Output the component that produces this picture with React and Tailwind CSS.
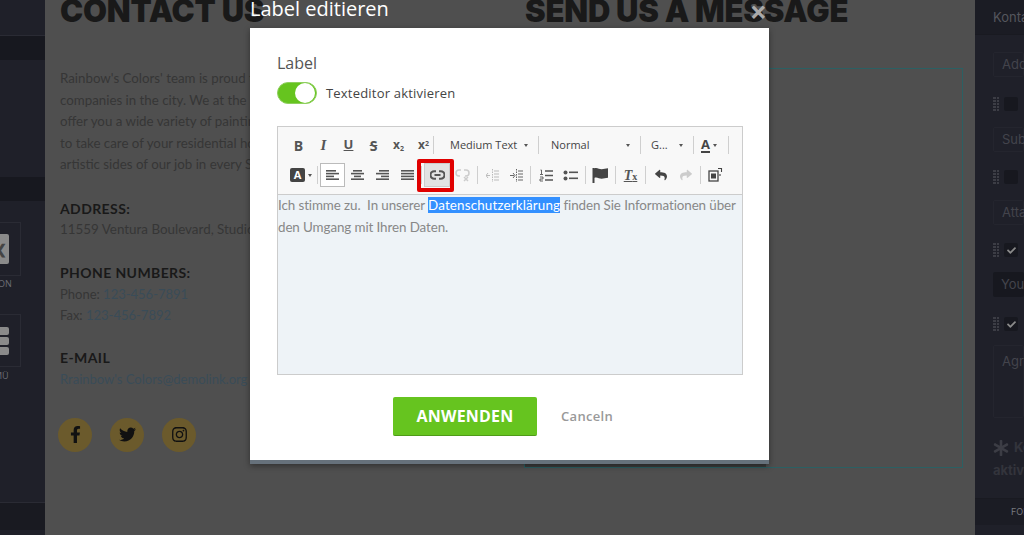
import React from "react";
import { FaFacebookF, FaTwitter, FaInstagram, FaReply, FaShare, FaCheck, FaAsterisk } from "react-icons/fa";

const Sep = () => <span className="mx-[2px] block h-[18px] w-px shrink-0 bg-[#cfcfcf]" />;

const Btn = ({ w = "w-[25px]", className = "", children }) => (
  <span className={`flex h-[24px] ${w} shrink-0 items-center justify-center text-[#555] ${className}`}>{children}</span>
);

const Lines = ({ rows, color = "#555" }) => (
  <svg width="13" height="13" viewBox="0 0 13 13" fill={color}>
    {rows.map(([x, w], i) => (
      <rect key={i} x={x} y={1 + i * 2.8} width={w} height="1.6" />
    ))}
  </svg>
);

const Caret = () => <span className="block h-0 w-0 shrink-0 border-x-[2.5px] border-t-[3px] border-x-transparent border-t-[#555]" />;

const Chain = () => (
  <svg width="15" height="10" viewBox="0 0 15 10" fill="none" stroke="#555" strokeWidth="2">
    <path d="M6 1.200H4.300a3.800 3.800 0 0 0 0 7.600H6" />
    <path d="M9 1.200h1.700a3.800 3.800 0 0 1 0 7.600H9" />
    <path d="M4.500 5h6" />
  </svg>
);

const BrokenChain = () => (
  <svg width="15" height="15" viewBox="0 0 15 15" fill="none" stroke="#ccc" strokeWidth="1.500">
    <path d="M6 2H4a3 3 0 0 0 0 6h1M9 2h2a3 3 0 0 1 0 6h-1" />
    <path d="M9 9l4 4M13 9l-4 4" />
  </svg>
);

const Indent = ({ color, flip }) => (
  <svg width="13" height="13" viewBox="0 0 13 13" fill="none" stroke={color} strokeWidth="1">
    <path d="M6.500 0v13" strokeDasharray="1.500 1" />
    <path d="M8 2h5M8 5h5M8 8h5M8 11h5M0 6.500h4" />
    <path d={flip ? "M3 4l2 2.500L3 9" : "M2 4L0 6.500 2 9"} />
  </svg>
);

const OrderedList = () => (
  <svg width="14" height="13" viewBox="0 0 14 13" fill="none" stroke="#555">
    <path d="M1.500 1h1v4M1 5.500h3M1 8h3v2H1v2h3" strokeWidth="0.9" />
    <path d="M6 2h8M6 6.500h8M6 11h8" strokeWidth="1.400" />
  </svg>
);

const BulletList = () => (
  <svg width="15" height="13" viewBox="0 0 15 13" fill="#555">
    <circle cx="2.500" cy="3.500" r="2" />
    <circle cx="2.500" cy="9.500" r="2" />
    <rect x="6" y="2.500" width="9" height="1.600" />
    <rect x="6" y="8.500" width="9" height="1.600" />
  </svg>
);

const Flag = () => (
  <svg width="17" height="16" viewBox="0 0 17 16" fill="#444">
    <rect x="0.500" y="1" width="2" height="15" />
    <path d="M2 1.500c3-1.500 5 .8 7.500.8 2.500 0 4-1 6.500-1v9.500c-2.500 0-4 1-6.500 1s-4.500-2.300-7.500-.8z" />
  </svg>
);

const CopyIcon = () => (
  <svg width="16" height="16" viewBox="0 0 16 16" fill="none" stroke="#444">
    <rect x="1" y="4" width="9" height="10" strokeWidth="1.300" />
    <rect x="3" y="6.500" width="5" height="5" fill="#444" stroke="none" />
    <path d="M10 1.500h3.500V5M12 7v2" strokeWidth="1.100" />
  </svg>
);

const Toolbar = () => (
  <div className="h-[68px] border-b border-[#ccc] bg-[#f8f8f8] pl-[8px] pt-[6px] font-['Open_Sans',sans-serif]">
    <div className="flex h-[24px] items-center">
      <Btn><b className="text-[14px]">B</b></Btn>
      <Btn><i className="font-['Liberation_Serif',serif] text-[15px] font-bold">I</i></Btn>
      <Btn><b className="text-[13px] underline">U</b></Btn>
      <Btn><b className="text-[14px] line-through">S</b></Btn>
      <Btn><b className="text-[12px] leading-none">x<sub className="text-[7px]">2</sub></b></Btn>
      <Btn><b className="text-[12px] leading-none">x<sup className="text-[7px]">2</sup></b></Btn>
      <span className="-ml-[5px] flex"><Sep /></span>
      <span className="ml-[14px] flex w-[86px] shrink-0 items-center gap-[7px] text-[11px] text-[#444]">Medium Text<Caret /></span>
      <Sep />
      <span className="ml-[10px] flex w-[87px] shrink-0 items-center justify-between pr-[8px] text-[11px] text-[#444]">Normal<Caret /></span>
      <Sep />
      <span className="ml-[8px] flex w-[40px] shrink-0 items-center justify-between pr-[8px] text-[11px] text-[#444]">G...<Caret /></span>
      <Sep />
      <span className="ml-[5px] flex w-[25px] shrink-0 items-center gap-[3px] text-[13px] font-bold text-[#444]"><span className="border-b-2 border-[#444] leading-[14px]">A</span><Caret /></span>
      <Sep />
    </div>
    <div className="mt-[6px] flex h-[24px] items-center">
      <span className="flex w-[29px] shrink-0 items-center justify-center gap-[3px] pl-[1px]">
        <span className="flex h-[14px] w-[15px] items-center justify-center rounded-[2px] bg-[#444] text-[11px] font-bold text-white">A</span>
        <Caret />
      </span>
      <Sep />
      <Btn className="border border-[#bbb] bg-white"><Lines rows={[[0, 10], [0, 13], [0, 8], [0, 13]]} /></Btn>
      <Btn><Lines rows={[[2, 9], [0, 13], [3, 7], [0, 13]]} /></Btn>
      <Btn><Lines rows={[[3, 10], [0, 13], [5, 8], [0, 13]]} /></Btn>
      <Btn><Lines rows={[[0, 13], [0, 13], [0, 13], [0, 13]]} /></Btn>
      <span className="-ml-[1px] flex"><Sep /></span>
      <Btn w="w-[26px]" className="relative border border-[#ccc] bg-[#e2e2e2]">
        <Chain />
        <span className="absolute -bottom-[6px] -left-[8px] -right-[5px] -top-[5px] rounded-[2px] border-[4px] border-[#e00000]" />
      </Btn>
      <Btn><BrokenChain /></Btn>
      <Sep />
      <Btn w="w-[24px]"><Indent color="#bbb" /></Btn>
      <Btn w="w-[24px]"><Indent color="#666" flip /></Btn>
      <Sep />
      <Btn><OrderedList /></Btn>
      <Btn><BulletList /></Btn>
      <Sep />
      <Btn><Flag /></Btn>
      <Sep />
      <Btn><span className="font-['Liberation_Serif',serif] text-[14px] font-bold italic underline">T<span className="text-[10px] not-italic">x</span></span></Btn>
      <Sep />
      <Btn><FaReply size={12} color="#444" /></Btn>
      <Btn><FaShare size={12} color="#ccc" /></Btn>
      <Sep />
      <Btn><CopyIcon /></Btn>
    </div>
  </div>
);

const Modal = () => (
  <div className="absolute left-[250px] top-0 w-[519px] font-['Open_Sans',sans-serif]">
    <div className="flex h-[28px] items-start justify-between pr-[1px]">
      <span className="-mt-[5px] text-[20px] leading-[27px] text-white">Label editieren</span>
      <span className="mr-[1px] -mt-[3px] text-[30px] font-bold leading-[30px] text-[#a9a9a9]">×</span>
    </div>
    <div className="h-[436px] border-b-[4px] border-[#66717b] bg-white px-[27px] pt-[24px] shadow-[0_2px_6px_rgba(0,0,0,0.4)]">
      <div className="text-[16px] leading-[22px] text-[#555]">Label</div>
      <div className="mt-[8px] flex items-center">
        <span className="flex h-[22px] w-[40px] items-center justify-end rounded-full border border-[#8fcf5f] bg-[#66c41f] pr-[1px]">
          <span className="h-[20px] w-[20px] rounded-full bg-white" />
        </span>
        <span className="ml-[9px] pt-[2px] text-[13px] tracking-[0.2px] text-[#444]">Texteditor aktivieren</span>
      </div>
      <div className="mt-[22px] h-[249px] w-[466px] border border-[#ccc]">
        <Toolbar />
        <div className="flow-root h-[179px] bg-[#eef3f7] font-['Lato',sans-serif] text-[13.4px] leading-[22px] tracking-[-0.1px] text-[#888]">
          <div className="-mt-px">
            Ich stimme zu.&nbsp; In unserer <span className="bg-[#3390ff] tracking-[0.15px] text-white">Datenschutzerklärung</span> finden Sie Informationen über den Umgang mit Ihren Daten.
          </div>
        </div>
      </div>
      <div className="mt-[22px] flex items-center pl-[116px]">
        <span className="flex h-[39px] w-[144px] items-center justify-center rounded-[2px] border-b border-[#4f9a18] bg-[#66c41f] text-[16px] font-bold tracking-[0.2px] text-white">ANWENDEN</span>
        <span className="ml-[24px] text-[13px] font-semibold tracking-[0.3px] text-[#999]">Canceln</span>
      </div>
    </div>
  </div>
);

const LeftPanel = () => (
  <aside className="flex h-full w-[45px] shrink-0 flex-col overflow-hidden bg-[#1f2029]">
    <div className="mt-[35px] h-[25px] shrink-0 border-t border-[#2a2b34] bg-[#17181f]" />
    <div className="mt-[117px] h-[24px] shrink-0 bg-[#17181f]" />
    <div className="ml-[-20px] mt-[21px] flex h-[54px] w-[41px] shrink-0 items-center justify-end border border-[#2a2b34] pr-[11px]">
      <span className="flex h-[30px] w-[20px] items-center justify-end rounded-[2px] bg-[#8a8a8a] pr-[2px] text-[13px] font-bold leading-none text-[#444]">❮</span>
    </div>
    <div className="-ml-[2px] pt-[2px] font-['Open_Sans',sans-serif] text-[9px] leading-[12px] text-[#6d6e75]">ON</div>
    <div className="ml-[-20px] mt-[24px] flex h-[53px] w-[41px] shrink-0 flex-col items-end justify-center gap-[2px] border border-[#2a2b34] pr-[11px]">
      <span className="h-[8px] w-[20px] rounded-[2px] bg-[#8a8a8a]" />
      <span className="h-[8px] w-[20px] rounded-[2px] bg-[#8a8a8a]" />
      <span className="h-[8px] w-[20px] rounded-[2px] bg-[#8a8a8a]" />
    </div>
    <div className="-ml-[6px] pt-[3px] font-['Open_Sans',sans-serif] text-[9px] leading-[12px] text-[#6d6e75]">MÜ</div>
    <div className="mt-[120px] h-[28px] shrink-0 border-t border-[#2a2b34] bg-[#191a21]" />
  </aside>
);

const Field = ({ text, className = "", dark }) => (
  <div className={`ml-[18px] flex shrink-0 rounded-[2px] pl-[8px] font-['Inter',sans-serif] text-[13px] text-[#43444c] ${dark ? "bg-[#17181f]" : "border border-[#24252e]"} ${className}`}>
    {text}
  </div>
);

const Check = ({ on, className = "" }) => (
  <div className={`flex shrink-0 items-center ${className}`}>
    <span className="ml-[18px] grid h-[14px] w-[6px] shrink-0 grid-cols-2 gap-px">
      {Array.from({ length: 10 }).map((_, i) => <span key={i} className="bg-[#3c3d45]" />)}
    </span>
    <span className="ml-[5px] flex h-[14px] w-[14px] shrink-0 items-center justify-center rounded-[2px] bg-[#17181f]">
      {on && <FaCheck size={9} color="#8a8a8a" />}
    </span>
  </div>
);

const RightPanel = () => (
  <aside className="flex h-full w-[49px] shrink-0 flex-col overflow-hidden whitespace-nowrap bg-[#1f2029]">
    <div className="flex h-[35px] shrink-0 items-center border-b border-[#191a21] bg-[#1b1c24] pl-[18px] pt-[2px] font-['Inter',sans-serif] text-[13px] text-[#55565d]">Kontakt</div>
    <Field text="Address" className="mt-[17px] h-[25px] items-center" />
    <Check className="mt-[20px]" />
    <Field text="Subject" className="mt-[16px] h-[25px] items-center" />
    <Check className="mt-[18px]" />
    <Field text="Attachment" className="mt-[16px] h-[25px] items-center" />
    <Check on className="mt-[18px]" />
    <Field text="Your" dark className="mt-[15px] h-[25px] items-center" />
    <Check on className="mt-[20px]" />
    <Field text="Agree" className="mt-[14px] h-[73px] items-start pt-[6px]" />
    <div className="ml-[18px] mt-[18px] flex shrink-0 items-center font-['Inter',sans-serif] text-[13px] font-bold leading-[23px] text-[#33343c]">
      <FaAsterisk className="shrink-0" size={16} color="#3c3d45" /><span className="ml-[5px]">Kontakt</span>
    </div>
    <div className="ml-[18px] shrink-0 font-['Inter',sans-serif] text-[13px] font-bold leading-[23px] text-[#33343c]">aktiv</div>
    <div className="mt-[16px] flex h-[27px] shrink-0 items-center border-t border-[#191a21] bg-[#1b1c24] pl-[36px] font-['Inter',sans-serif] text-[9px] text-[#77787e]">FORM</div>
  </aside>
);

const social = [FaFacebookF, FaTwitter, FaInstagram];

const Main = () => (
  <main className="flex h-full min-w-0 flex-1 overflow-hidden bg-[#4f4f4f]">
    <div className="w-[480px] shrink-0 whitespace-nowrap pl-[15px] font-['Lato',sans-serif]">
      <h1 className="-mt-[5px] h-[32px] font-['Inter',sans-serif] text-[31px] font-black leading-[32px] tracking-[-0.2px] text-[#191919]">CONTACT US</h1>
      <div className="mt-[41px] text-[13.3px] leading-[21.5px] text-[#363636]">
        <p>Rainbow's Colors' team is proud to be one of the best painting</p>
        <p>companies in the city. We at the Rainbow's Colors are glad to</p>
        <p>offer you a wide variety of painting services. We are ready</p>
        <p>to take care of your residential house and show you the</p>
        <p>artistic sides of our job in every Single project.</p>
      </div>
      <h2 className="mt-[22px] text-[14px] font-bold leading-[21px] tracking-[0.4px] text-[#191919]">ADDRESS:</h2>
      <p className="text-[13.4px] leading-[21px] text-[#363636]">11559 Ventura Boulevard, Studio City</p>
      <h2 className="mt-[22px] text-[14px] font-bold leading-[21px] tracking-[0.4px] text-[#191919]">PHONE NUMBERS:</h2>
      <p className="mt-[1px] text-[13px] leading-[21px] text-[#363636]">Phone: <span className="text-[#3a4c58]">123-456-7891</span></p>
      <p className="text-[13px] leading-[21px] text-[#363636]">Fax: <span className="text-[#3a4c58]">123-456-7892</span></p>
      <h2 className="mt-[21px] text-[14px] font-bold leading-[21px] tracking-[0.4px] text-[#191919]">E-MAIL</h2>
      <p className="mt-[1px] text-[13px] leading-[21px] text-[#3a4c58]">Rrainbow's Colors@demolink.org</p>
      <div className="-ml-[2px] mt-[28px] flex gap-[18px]">
        {social.map((Icon, i) => (
          <span key={i} className="flex h-[34px] w-[34px] items-center justify-center rounded-full bg-[#6b5a2c]">
            <Icon size={17} color="#111" />
          </span>
        ))}
      </div>
    </div>
    <div className="w-[450px] shrink-0 whitespace-nowrap">
      <h1 className="-mt-[5px] h-[32px] font-['Inter',sans-serif] text-[31px] font-black leading-[32px] tracking-[-0.2px] text-[#191919]">SEND US A MESSAGE</h1>
      <div className="-ml-[1px] mt-[41px] flex h-[400px] w-[439px] flex-col justify-end border border-[#2b6063]">
        <div className="h-[7px] w-[241px] bg-[#3c3c3c]" />
      </div>
    </div>
  </main>
);

export default function App() {
  return (
    <div className="relative flex h-[535px] w-[1024px] overflow-hidden bg-[#4f4f4f]">
      <LeftPanel />
      <Main />
      <RightPanel />
      <Modal />
    </div>
  );
}
